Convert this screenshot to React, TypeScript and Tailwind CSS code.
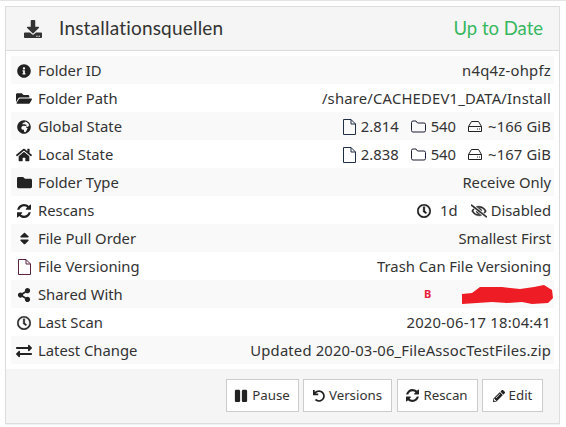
import React from "react";
import {
  FaDownload, FaInfoCircle, FaFolderOpen, FaGlobeAfrica, FaHome, FaFolder, FaSort,
  FaShareAlt, FaRegClock, FaExchangeAlt, FaRegEyeSlash,
  FaPause, FaUndo, FaPencilAlt,
} from "react-icons/fa";

const Refresh = ({ size }: { size: number }) => (
  <svg width={size} height={size} viewBox="0 0 1536 1536" fill="currentColor">
    <path d="M1511 928q0 5-1 7-64 268-268 434.5t-478 166.5q-146 0-282.5-55t-243.5-157l-129 129q-19 19-45 19t-45-19-19-45v-448q0-26 19-45t45-19h448q26 0 45 19t19 45-19 45l-137 137q71 66 161 102t187 36q134 0 250-65t186-179q11-17 53-117 8-23 30-23h192q13 0 22.5 9.5t9.5 22.5zm25-800v448q0 26-19 45t-45 19h-448q-26 0-45-19t-19-45 19-45l138-138q-148-137-349-137-134 0-250 65t-186 179q-11 17-53 117-8 23-30 23h-199q-13 0-22.5-9.5t-9.5-22.5v-7q65-268 270-434.5t480-166.5q146 0 284 55.5t245 156.5l130-129q19-19 45-19t45 19 19 45z" />
  </svg>
);

const FileO = ({ className = "" }: { className?: string }) => (
  <svg width="14" height="16" viewBox="0 0 14 16" fill="none" stroke="currentColor" strokeWidth="1" className={className}>
    <path d="M1.5 .5 H9 L13.5 5 V15.5 H1.5 Z M9 .5 V5 H13.5" />
  </svg>
);

const FolderO = () => (
  <svg width="15" height="13" viewBox="0 0 15 13" fill="none" stroke="currentColor" strokeWidth="1">
    <path d="M.5 2.5 Q.5 1 2 1 H5 L6.5 3 H13 Q14.5 3 14.5 4.5 V10.5 Q14.5 12 13 12 H2 Q.5 12 .5 10.5 Z" />
  </svg>
);

const HddO = () => (
  <svg width="14" height="11" viewBox="0 0 14 11" fill="none" stroke="currentColor" strokeWidth="1">
    <path d="M3.5 .5 H10.5 L13.5 5.5 V10.5 H.5 V5.5 Z M.5 5.5 H13.5" />
    <path d="M9 8 H10 M11 8 H12" />
  </svg>
);

const State = ({ files, size }: { files: string; size: string }) => (
  <span className="flex items-center gap-[12px] text-[#333]">
    <span className="flex items-center gap-[5px]"><FileO className="text-[#1f2d45]" />{files}</span>
    <span className="flex items-center gap-[5px]"><span className="text-[#1f1f33]"><FolderO /></span>540</span>
    <span className="flex items-center gap-[6px]"><span className="text-[#222]"><HddO /></span><span className="tracking-[0.13px]">{size}</span></span>
  </span>
);

const rows: { icon: React.ReactNode; label: string; value: React.ReactNode }[] = [
  { icon: <FaInfoCircle className="text-[14px]" />, label: "Folder ID", value: <span className="tracking-[0.25px]">n4q4z-ohpfz</span> },
  { icon: <FaFolderOpen className="text-[17px]" />, label: "Folder Path", value: <span className="tracking-[0.2px]">/share/CACHEDEV1_DATA/Install</span> },
  { icon: <FaGlobeAfrica className="text-[14px]" />, label: "Global State", value: <State files="2.814" size="~166 GiB" /> },
  { icon: <FaHome className="text-[16px]" />, label: "Local State", value: <State files="2.838" size="~167 GiB" /> },
  { icon: <FaFolder className="text-[15px]" />, label: "Folder Type", value: "Receive Only" },
  {
    icon: <Refresh size={14} />,
    label: "Rescans",
    value: (
      <span className="flex items-center gap-[13px]">
        <span className="flex items-center gap-[9px]"><FaRegClock className="text-[14px] text-[#111]" strokeWidth={16} stroke="currentColor" />1d</span>
        <span className="flex items-center gap-[4px]"><FaRegEyeSlash className="text-[16px] text-[#222]" strokeWidth={20} stroke="currentColor" />Disabled</span>
      </span>
    ),
  },
  { icon: <FaSort className="text-[15px]" />, label: "File Pull Order", value: "Smallest First" },
  { icon: <FileO className="text-[#5b2340]" />, label: "File Versioning", value: "Trash Can File Versioning" },
  {
    icon: <FaShareAlt className="text-[14px]" />,
    label: "Shared With",
    value: (
      <span className="flex items-center h-[20px] w-[255px] justify-between">
        <span className="text-[11px] font-bold text-[#e8203a] ml-[128px]">B</span>
        <svg width="91" height="19" viewBox="0 0 91 19" className="mr-[-2px]">
          <path d="M0 9 L10 8 L18 2 L40 2 L58 4 L72 2 L82 0 L90 5 L91 13 L86 18 L70 19 L60 17 L45 18 L30 17 L0 19 Z" fill="#ee1c25" />
        </svg>
      </span>
    ),
  },
  { icon: <FaRegClock className="text-[14px]" strokeWidth={16} stroke="currentColor" />, label: "Last Scan", value: <span className="tracking-[0.25px]">2020-06-17 18:04:41</span> },
  { icon: <FaExchangeAlt className="text-[16px]" />, label: "Latest Change", value: <span className="tracking-[0.17px]">Updated 2020-03-06_FileAssocTestFiles.zip</span> },
];

const Btn = ({ icon, text, w }: { icon: React.ReactNode; text: string; w: string }) => (
  <button className={`flex items-center justify-center gap-[4px] h-[33px] bg-white border border-[#cccccc] text-[13.3px] text-[#333] ${w}`}>
    {icon}
    {text}
  </button>
);

export default function App() {
  return (
    <div className="w-[566px] h-[427px] bg-white text-[#333] text-[14.8px]" style={{ fontFamily: '"Noto Sans", "Open Sans", sans-serif' }}>
      <div className="h-[1px] bg-[#e4e4e4]" />
      <div className="pt-[5px] pl-[5px]">
        <div className="w-[555px] h-[418px] flex flex-col border border-[#dddddd] shadow-[0_1px_1px_rgba(0,0,0,0.05)]">
          <div className="h-[44px] shrink-0 flex items-center justify-between bg-[#f5f5f5] border-b border-[#dddddd] pl-[18px] pr-[16px] text-[19px]" style={{ fontFamily: 'Lato, sans-serif' }}>
            <span className="flex items-center gap-[17px]">
              <FaDownload className="text-[18px] text-[#333]" />
              <span className="tracking-[0.2px]">Installationsquellen</span>
            </span>
            <span className="text-[18.5px] text-[#37b860]">Up to Date</span>
          </div>
          <div className="h-[318px] shrink-0 px-[5px] pt-[5px] bg-white">
            {rows.map((r, i) => (
              <div key={r.label} className={`h-[28px] pt-[1px] flex items-center justify-between pl-[5px] pr-[3px] ${i % 2 === 0 ? "bg-[#f9f9f9]" : "bg-white"}`}>
                <span className="flex items-center">
                  <span className="w-[16px] mr-[6px] flex justify-center text-[#222]">{r.icon}</span>
                  {r.label}
                </span>
                <span>{r.value}</span>
              </div>
            ))}
          </div>
          <div className="flex-1 bg-[#f5f5f5] flex justify-end items-start gap-[4.5px] pt-[10px] pr-[16px]">
            <Btn w="w-[73px]" icon={<FaPause className="text-[14px] text-[#222]" />} text="Pause" />
            <Btn w="w-[89px]" icon={<FaUndo className="text-[12px] text-[#222]" />} text="Versions" />
            <Btn w="w-[81px]" icon={<span className="text-[#222]"><Refresh size={13} /></span>} text="Rescan" />
            <Btn w="w-[61px]" icon={<FaPencilAlt className="text-[12px] text-[#222]" />} text="Edit" />
          </div>
        </div>
      </div>
    </div>
  );
}
